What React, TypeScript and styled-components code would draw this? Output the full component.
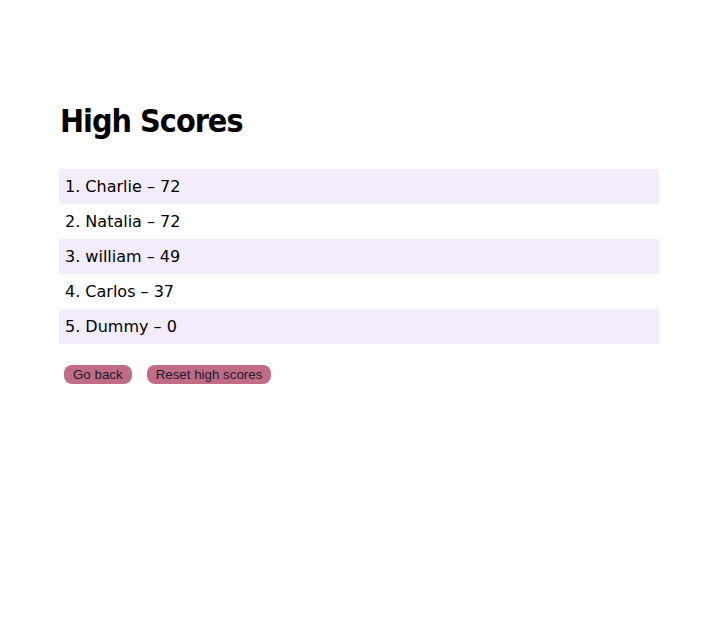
import React from "react";
import styled, { createGlobalStyle } from "styled-components";

const Global = createGlobalStyle`
  body { margin: 8px; background: #fff; font-family: "DejaVu Sans", sans-serif; }
`;

const Container = styled.main`
  width: 600px;
  margin: 0 auto;
  padding-top: 94px;
`;

const Title = styled.h1`
  font-family: "DejaVu Sans Condensed", "DejaVu Sans", sans-serif;
  font-stretch: condensed;
  font-size: 32px;
  font-weight: bold;
  letter-spacing: -1px;
  margin: 0 0 29px 1px;
`;

const List = styled.ol`
  list-style: none;
  margin: 0;
  padding: 0;
`;

const Row = styled.li<{ $alt: boolean }>`
  height: 35px;
  display: flex;
  align-items: center;
  padding: 0 6px;
  font-size: 16px;
  color: #000;
  background: ${(p) => (p.$alt ? "#f3edfb" : "transparent")};
`;

const Actions = styled.div`
  display: flex;
  gap: 15px;
  margin: 21px 0 0 5px;
`;

const Button = styled.button`
  font-family: "Liberation Sans", Arial, sans-serif;
  font-size: 13.333px;
  height: 19px;
  padding: 0 9px;
  border: none;
  border-radius: 8px;
  background: #c06c84;
  color: #1b1b2f;
  cursor: pointer;
`;

const scores = [
  ["Charlie", 72],
  ["Natalia", 72],
  ["william", 49],
  ["Carlos", 37],
  ["Dummy", 0],
] as const;

export default function App() {
  return (
    <>
      <Global />
      <Container>
        <Title>High Scores</Title>
        <List>
          {scores.map(([name, score], i) => (
            <Row key={name} $alt={i % 2 === 0}>
              {i + 1}. {name} – {score}
            </Row>
          ))}
        </List>
        <Actions>
          <Button>Go back</Button>
          <Button>Reset high scores</Button>
        </Actions>
      </Container>
    </>
  );
}
